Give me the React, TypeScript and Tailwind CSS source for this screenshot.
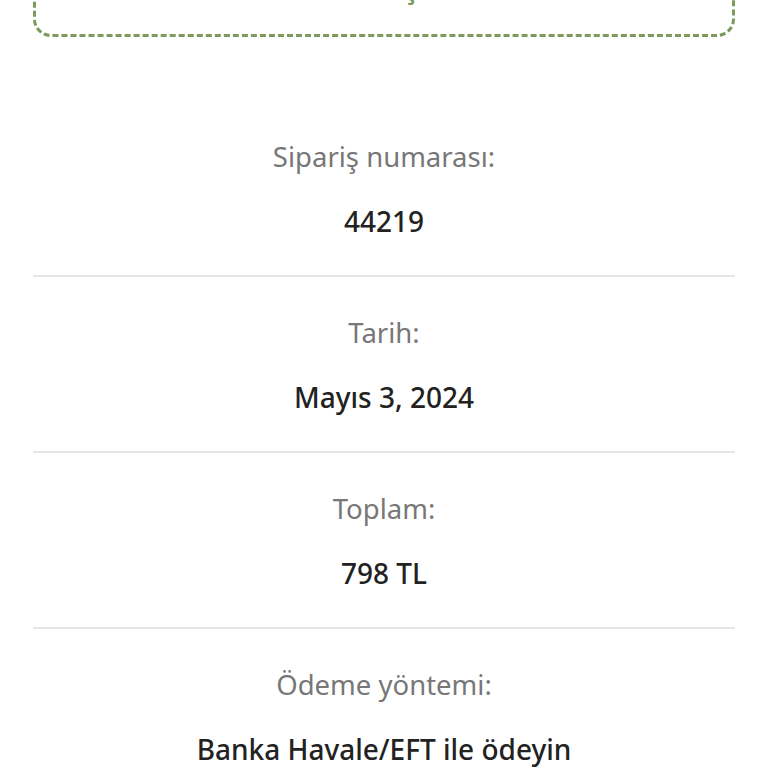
const rows = [
  { label: 'Sipariş numarası:', value: '44219' },
  { label: 'Tarih:', value: 'Mayıs 3, 2024' },
  { label: 'Toplam:', value: '798 TL' },
  { label: 'Ödeme yöntemi:', value: 'Banka Havale/EFT ile ödeyin' },
];

export default function App() {
  return (
    <div className="min-h-screen bg-white px-[33px] font-['Noto_Sans',sans-serif] overflow-hidden">
      <div className="mt-[-83px] h-[120px] rounded-[18px] border-[3px] border-dashed border-[#7c9a5b] flex items-end justify-center pb-[27px]">
        <p className="text-[28px] leading-[40px] font-semibold text-[#7c9a5b] pl-[4px]">alınmıştır.</p>
      </div>
      <ul className="mt-[64px]">
        {rows.map((row, i) => (
          <li
            key={row.label}
            className={`flex flex-col items-center gap-[24px] pt-[36px] pb-[34px] ${
              i < rows.length - 1 ? 'border-b-2 border-[#e6e6e6]' : ''
            }`}
          >
            <span className="text-[27.5px] leading-[40px] text-[#777777]">{row.label}</span>
            <span className="text-[28px] leading-[40px] font-medium text-[#222222]">{row.value}</span>
          </li>
        ))}
      </ul>
    </div>
  );
}
